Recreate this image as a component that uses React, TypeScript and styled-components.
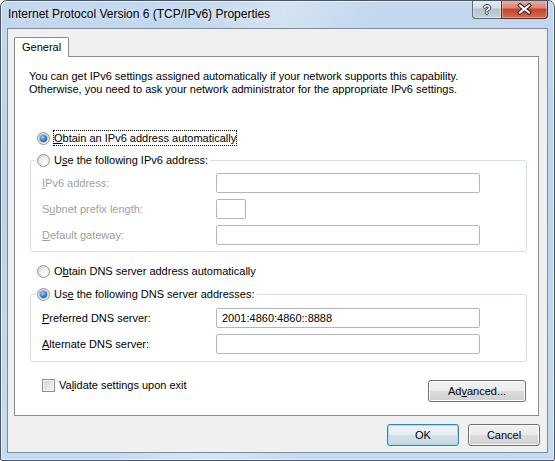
import React from "react";
import styled, { createGlobalStyle } from "styled-components";

const FONT = `"Liberation Sans", Arial, sans-serif`;

const GlobalStyle = createGlobalStyle`
  html, body { margin: 0; padding: 0; background: #ffffff; }
  body { font-family: ${FONT}; font-size: 11px; color: #000; }
  * { box-sizing: border-box; }
`;

const Window = styled.div`
  width: 555px;
  height: 461px;
  display: flex;
  flex-direction: column;
  border: 1px solid #4a5665;
  border-radius: 7px 7px 2px 2px;
  background:
    linear-gradient(100deg, rgba(255,255,255,0) 30%, rgba(255,255,255,0.28) 45%, rgba(255,255,255,0) 60%),
    linear-gradient(180deg, #c3d8ee 0%, #bcd3eb 40%, #c6dbf0 100%);
  box-shadow: inset 0 0 0 1px rgba(255, 255, 255, 0.55);
  padding: 0 6px 7px 6px;
  overflow: hidden;
`;

const TitleBar = styled.div`
  display: flex;
  align-items: flex-start;
  height: 27px;
  padding-left: 1px;
`;

const Title = styled.div`
  align-self: center;
  font-size: 12px;
  line-height: 26px;
  margin-top: -1px;
  color: #000;
  text-shadow: 0 0 6px rgba(255, 255, 255, 0.9);
`;

const CaptionButtons = styled.div`
  margin-left: auto;
  margin-top: -1px;
  display: flex;
`;

const HelpButton = styled.div`
  width: 29px;
  height: 19px;
  border: 1px solid #5a6878;
  border-top: none;
  border-right: none;
  border-radius: 0 0 0 4px;
  background: linear-gradient(180deg, #e6eef6 0%, #d2dde8 45%, #b4c2d0 50%, #c4d2df 100%);
  box-shadow: inset 0 0 0 1px rgba(255, 255, 255, 0.45);
  display: flex;
  align-items: center;
  justify-content: center;
  color: #fff;
  font-weight: bold;
  font-size: 13px;
  line-height: 1;
  text-shadow: 1px 0 0 #334455, -1px 0 0 #334455, 0 1px 0 #334455, 0 -1px 0 #334455;
`;

const CloseButton = styled.div`
  width: 47px;
  height: 19px;
  border: 1px solid #5a2a22;
  border-top: none;
  border-radius: 0 0 4px 0;
  background: linear-gradient(180deg, #eab2a4 0%, #d98370 45%, #c2442c 50%, #d56b52 100%);
  box-shadow: inset 0 0 0 1px rgba(255, 255, 255, 0.35);
  display: flex;
  align-items: center;
  justify-content: center;
`;

const Client = styled.div`
  flex: 1;
  display: flex;
  flex-direction: column;
  border: 1px solid #7d8b99;
  background: #f0f0f0;
  padding: 8px 8px 6px 6px;
`;

const TabStrip = styled.div`
  display: flex;
  height: 19px;
`;

const Tab = styled.div`
  position: relative;
  z-index: 1;
  height: 20px;
  margin-bottom: -1px;
  border: 1px solid #898c95;
  border-bottom: none;
  border-radius: 2px 2px 0 0;
  background: #fff;
  padding: 0 7px;
  line-height: 19px;
`;

const TabPanel = styled.div`
  flex: 1;
  display: flex;
  flex-direction: column;
  border: 1px solid #898c95;
  background: #fff;
  padding: 13px 11px 0 14px;
`;

const Description = styled.p`
  margin: 0;
  line-height: 13px;
`;

const OptionRow = styled.div<{ $mt?: number; $ml?: number }>`
  display: flex;
  align-items: center;
  height: 16px;
  gap: 3px;
  margin-top: ${(p) => p.$mt ?? 0}px;
  margin-left: ${(p) => p.$ml ?? 0}px;
`;

const RadioCircle = styled.span<{ $checked?: boolean }>`
  width: 13px;
  height: 13px;
  flex: none;
  border-radius: 50%;
  border: 1px solid #949494;
  background: radial-gradient(circle at 65% 70%, #ffffff 0%, #ededed 45%, #cfcfcf 100%);
  display: flex;
  align-items: center;
  justify-content: center;
  &::after {
    content: "";
    display: ${(p) => (p.$checked ? "block" : "none")};
    width: 7px;
    height: 7px;
    border-radius: 50%;
    background: radial-gradient(circle at 40% 35%, #a9d8fb 0%, #2f7cc6 50%, #113f75 100%);
    box-shadow: 0 0 0 1px rgba(40, 80, 130, 0.3);
  }
`;

const CheckSquare = styled.span`
  width: 13px;
  height: 13px;
  flex: none;
  border: 1px solid #8e8f8f;
  background: linear-gradient(135deg, #cdd1d6 0%, #f7f7f7 100%);
  box-shadow: inset 0 0 0 1px #f4f4f4;
`;

const OptionText = styled.span<{ $focused?: boolean }>`
  display: inline-block;
  line-height: 16px;
  padding: 0 1px;
  outline: ${(p) => (p.$focused ? "1px dotted #000" : "none")};
  outline-offset: -1px;
  white-space: nowrap;
`;

const Key = styled.span`
  text-decoration: underline;
  text-underline-offset: 1px;
`;

const GroupBox = styled.fieldset<{ $mt: number; $pb: number }>`
  margin: ${(p) => p.$mt}px 0 0 1px;
  padding: 0 0 ${(p) => p.$pb}px 0;
  border: 1px solid #d5dfe5;
  border-radius: 3px;
  min-width: 0;
`;

const Legend = styled.legend`
  margin-left: 5px;
  padding: 0 1px;
`;

const GroupBody = styled.div<{ $pt: number }>`
  display: flex;
  flex-direction: column;
  gap: 6px;
  padding: ${(p) => p.$pt}px 0 0 11px;
`;

const FieldRow = styled.div`
  display: grid;
  grid-template-columns: 174px auto;
  align-items: center;
  height: 20px;
`;

const FieldLabel = styled.span<{ $disabled?: boolean }>`
  color: ${(p) => (p.$disabled ? "#a0a0a0" : "#000")};
  white-space: nowrap;
`;

const TextBox = styled.div<{ $w: number }>`
  width: ${(p) => p.$w}px;
  height: 20px;
  border: 1px solid #b4b6bb;
  border-radius: 2px;
  background: #fff;
  padding: 0 5px;
  line-height: 18px;
  white-space: nowrap;
`;

const BottomRow = styled.div`
  margin-top: 15px;
  display: flex;
  justify-content: space-between;
  align-items: flex-start;
  padding-left: 13px;
`;

const PushButton = styled.div<{ $w: number; $default?: boolean; $mt?: number; $mr?: number }>`
  width: ${(p) => p.$w}px;
  height: 22px;
  margin-top: ${(p) => p.$mt ?? 0}px;
  margin-right: ${(p) => p.$mr ?? 0}px;
  border: 1px solid ${(p) => (p.$default ? "#3c7fb1" : "#707070")};
  border-radius: 3px;
  background: ${(p) =>
    p.$default
      ? "linear-gradient(180deg, #eef3f7 0%, #e6edf2 50%, #d5e0e8 50%, #c9d7e2 100%)"
      : "linear-gradient(180deg, #f2f2f2 0%, #ebebeb 50%, #dddddd 50%, #cfcfcf 100%)"};
  box-shadow: inset 0 0 0 1px ${(p) => (p.$default ? "#a5dcf7" : "#fcfcfc")};
  text-align: center;
  line-height: 20px;
  white-space: nowrap;
`;

const DialogButtons = styled.div`
  margin-top: 8px;
  margin-right: -1px;
  display: flex;
  justify-content: flex-end;
  gap: 9px;
`;

const CloseIcon = () => (
  <svg width="15" height="12" viewBox="0 0 15 12">
    <path d="M3 2.5 L12 9.5 M12 2.5 L3 9.5" stroke="#3b1d17" strokeWidth="4.2" strokeLinecap="square" fill="none" />
    <path d="M3 2.5 L12 9.5 M12 2.5 L3 9.5" stroke="#ffffff" strokeWidth="2.2" strokeLinecap="square" fill="none" />
  </svg>
);

export default function App() {
  return (
    <>
      <GlobalStyle />
      <Window>
        <TitleBar>
          <Title>Internet Protocol Version 6 (TCP/IPv6) Properties</Title>
          <CaptionButtons>
            <HelpButton>?</HelpButton>
            <CloseButton>
              <CloseIcon />
            </CloseButton>
          </CaptionButtons>
        </TitleBar>
        <Client>
          <TabStrip>
            <Tab>General</Tab>
          </TabStrip>
          <TabPanel>
            <Description>
              You can get IPv6 settings assigned automatically if your network supports this capability.
              <br />
              Otherwise, you need to ask your network administrator for the appropriate IPv6 settings.
            </Description>

            <OptionRow $mt={34} $ml={8}>
              <RadioCircle $checked />
              <OptionText $focused>
                <Key>O</Key>btain an IPv6 address automatically
              </OptionText>
            </OptionRow>

            <GroupBox $mt={6} $pb={6}>
              <Legend>
                <OptionRow>
                  <RadioCircle />
                  <OptionText>
                    U<Key>s</Key>e the following IPv6 address:
                  </OptionText>
                </OptionRow>
              </Legend>
              <GroupBody $pt={5}>
                <FieldRow>
                  <FieldLabel $disabled>
                    <Key>I</Key>Pv6 address:
                  </FieldLabel>
                  <TextBox $w={264} />
                </FieldRow>
                <FieldRow>
                  <FieldLabel $disabled>
                    S<Key>u</Key>bnet prefix length:
                  </FieldLabel>
                  <TextBox $w={30} />
                </FieldRow>
                <FieldRow>
                  <FieldLabel $disabled>
                    <Key>D</Key>efault gateway:
                  </FieldLabel>
                  <TextBox $w={264} />
                </FieldRow>
              </GroupBody>
            </GroupBox>

            <OptionRow $mt={11} $ml={8}>
              <RadioCircle />
              <OptionText>
                O<Key>b</Key>tain DNS server address automatically
              </OptionText>
            </OptionRow>

            <GroupBox $mt={7} $pb={7}>
              <Legend>
                <OptionRow>
                  <RadioCircle $checked />
                  <OptionText>
                    Us<Key>e</Key> the following DNS server addresses:
                  </OptionText>
                </OptionRow>
              </Legend>
              <GroupBody $pt={6}>
                <FieldRow>
                  <FieldLabel>
                    <Key>P</Key>referred DNS server:
                  </FieldLabel>
                  <TextBox $w={264}>2001:4860:4860::8888</TextBox>
                </FieldRow>
                <FieldRow>
                  <FieldLabel>
                    <Key>A</Key>lternate DNS server:
                  </FieldLabel>
                  <TextBox $w={264} />
                </FieldRow>
              </GroupBody>
            </GroupBox>

            <BottomRow>
              <OptionRow>
                <CheckSquare />
                <OptionText>
                  Va<Key>l</Key>idate settings upon exit
                </OptionText>
              </OptionRow>
              <PushButton $w={98} $mt={3} $mr={1}>
                Ad<Key>v</Key>anced...
              </PushButton>
            </BottomRow>
          </TabPanel>
          <DialogButtons>
            <PushButton $w={72} $default>
              OK
            </PushButton>
            <PushButton $w={72}>Cancel</PushButton>
          </DialogButtons>
        </Client>
      </Window>
    </>
  );
}
